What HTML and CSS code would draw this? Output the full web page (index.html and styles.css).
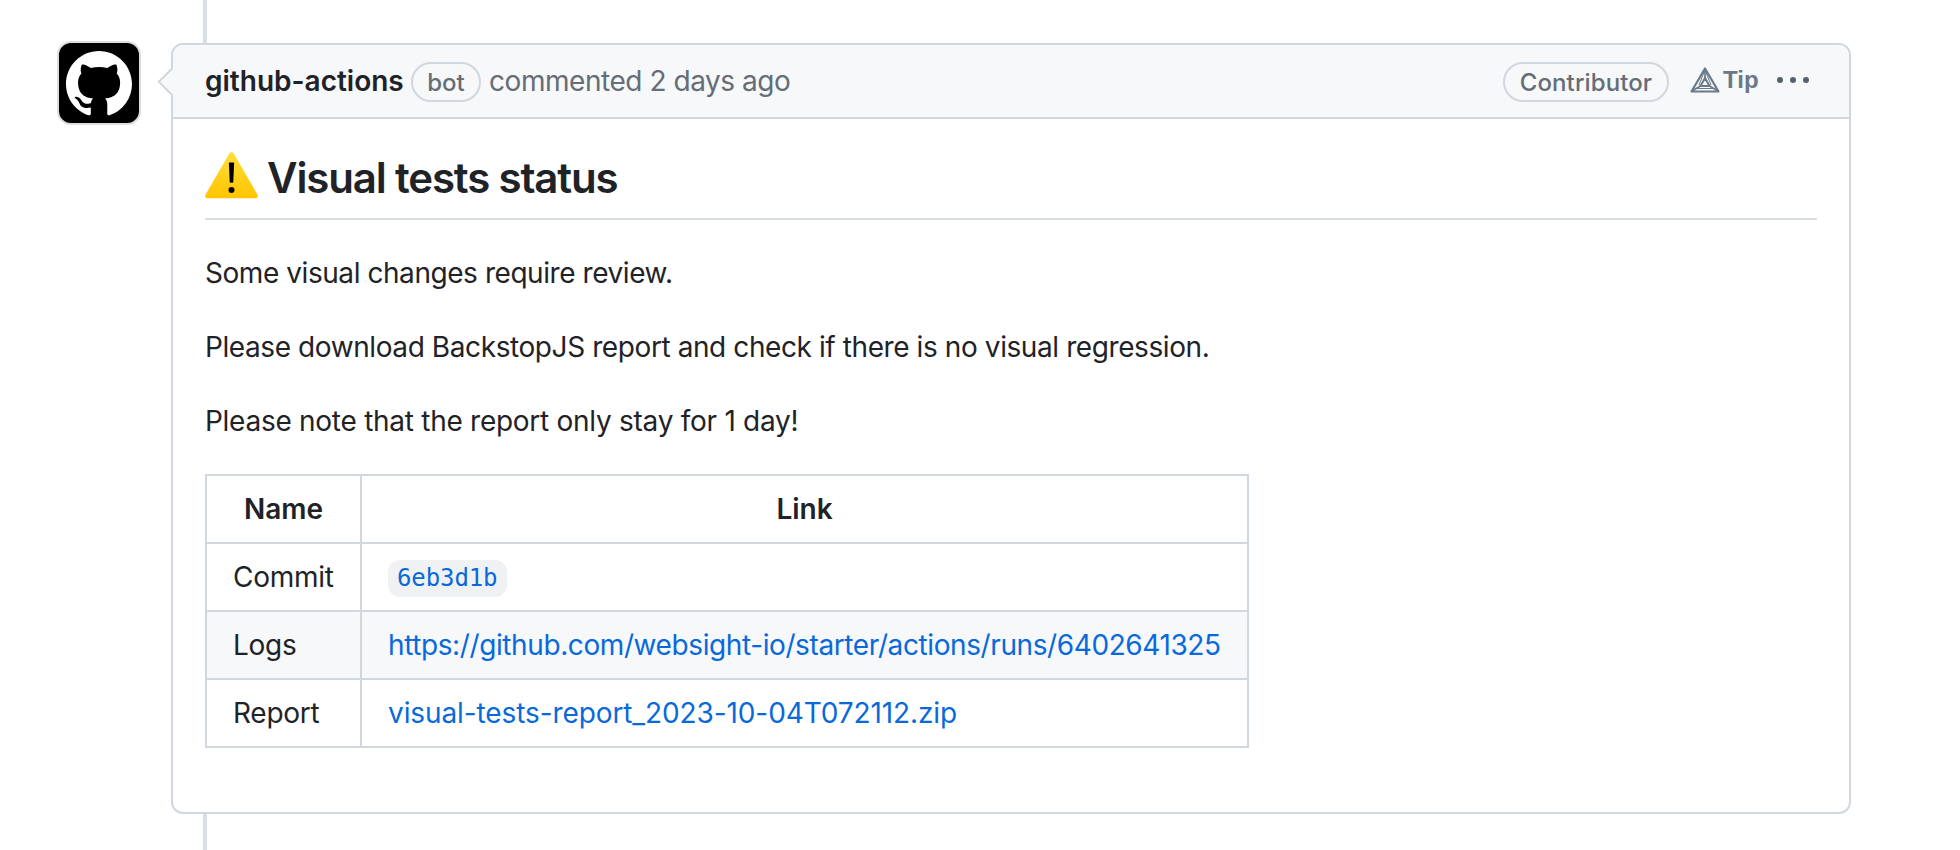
FILE: index.html
```html
<!DOCTYPE html>
<html lang="en">
<head>
<meta charset="utf-8">
<title>Visual tests status</title>
<link rel="stylesheet" href="styles.css">
</head>
<body>
<main class="timeline">
  <div class="avatar">
    <svg class="avatar-mark" viewBox="0 0 16 16"><path fill="#fff" d="M8 0C3.58 0 0 3.58 0 8c0 3.54 2.29 6.53 5.47 7.59.4.07.55-.17.55-.38 0-.19-.01-.82-.01-1.49-2.01.37-2.53-.49-2.69-.94-.09-.23-.48-.94-.82-1.13-.28-.15-.68-.52-.01-.53.63-.01 1.08.58 1.23.82.72 1.21 1.87.87 2.33.66.07-.52.28-.87.51-1.07-1.78-.2-3.64-.89-3.64-3.95 0-.87.31-1.59.82-2.15-.08-.2-.36-1.02.08-2.12 0 0 .67-.21 2.2.82.64-.18 1.32-.27 2-.27.68 0 1.36.09 2 .27 1.53-1.04 2.2-.82 2.2-.82.44 1.1.16 1.92.08 2.12.51.56.82 1.27.82 2.15 0 3.07-1.87 3.75-3.65 3.95.29.25.54.73.54 1.48 0 1.07-.01 1.93-.01 2.2 0 .21.15.46.55.38A8.013 8.013 0 0016 8c0-4.42-3.58-8-8-8z"/></svg>
  </div>
  <div class="thread">
    <div class="rail rail-top"></div>
    <article class="comment">
      <svg class="caret" viewBox="0 0 16 30"><path d="M16 1.5 2 15l14 13.500z" fill="#f6f8fa"/><path d="M15 1.500 1.800 14.700 15 27.900" fill="none" stroke="#d0d7de" stroke-width="2"/></svg>
      <header class="comment-header">
        <strong class="author">github-actions</strong>
        <span class="label label-bot">bot</span>
        <span class="meta">commented 2 days ago</span>
        <span class="label label-role">Contributor</span>
        <span class="tip">
          <svg class="tip-icon" viewBox="0 0 30 26" fill="none" stroke="#6b7a89" stroke-linejoin="round"><path stroke-width="2.200" d="M15 1.500 1.500 24.500h27z"/><path stroke-width="2" d="M15 11 10.500 19h9z"/><path stroke-width="1.700" d="M15 2v9M2 24l8.500-5M28 24l-8.500-5"/><path stroke-width="1" d="M14.500 4 9 18M15.500 4 21 18M6 21.500h18"/></svg>
          <span class="tip-text">Tip</span>
        </span>
        <svg class="kebab" viewBox="0 0 34 8" fill="#57606a"><circle cx="4" cy="4" r="3"/><circle cx="17" cy="4" r="3"/><circle cx="30" cy="4" r="3"/></svg>
      </header>
      <div class="comment-body">
        <h2 class="title">
          <svg class="warning" viewBox="0 0 53 47"><defs><linearGradient id="warn" x1="0" y1="0" x2="0" y2="1"><stop offset="0" stop-color="#ffdf3c"/><stop offset="1" stop-color="#ffc400"/></linearGradient></defs><path fill="url(#warn)" d="M24.100 1.700c1-1.800 3.800-1.800 4.800 0L52.400 42.500c1 1.900 0 3.800-2.200 3.800H2.800C.600 46.300-.400 44.400.600 42.500z"/><path fill="#000" d="M23.900 11.600c-.1-.8.300-1.200 1-1.200h3.200c.7 0 1.100.4 1 1.200l-.8 18.200c0 .6-.3 1-.8 1h-2c-.5 0-.8-.4-.8-1z"/><circle cx="26.500" cy="38" r="3"/></svg>
          <span class="title-text">Visual tests status</span>
        </h2>
        <p class="para para-1">Some visual changes require review.</p>
        <p class="para para-2">Please download BackstopJS report and check if there is no visual regression.</p>
        <p class="para para-3">Please note that the report only stay for 1 day!</p>
        <table class="results">
          <thead><tr><th class="col-name">Name</th><th>Link</th></tr></thead>
          <tbody>
            <tr><td>Commit</td><td><a class="link commit"><code class="sha">6eb3d1b</code></a></td></tr>
            <tr class="striped"><td>Logs</td><td><a class="link link-logs">https://github.com/websight-io/starter/actions/runs/6402641325</a></td></tr>
            <tr><td>Report</td><td><a class="link link-report">visual-tests-report_2023-10-04T072112.zip</a></td></tr>
          </tbody>
        </table>
      </div>
    </article>
    <div class="rail"></div>
  </div>
</main>
</body>
</html>
```
FILE: styles.css
```css
* { box-sizing: border-box; }
body {
  margin: 0;
  background: #fff;
  color: #1f2328;
  font: 28px/42px Inter, "Liberation Sans", sans-serif;
}
.timeline {
  display: flex;
  gap: 30px;
  height: 850px;
  padding: 0 109px 0 57px;
  overflow: hidden;
}
.avatar {
  display: flex;
  flex: none;
  justify-content: center;
  width: 84px;
  height: 84px;
  margin-top: 41px;
  padding-top: 8px;
  border: 2px solid #dddddd;
  border-radius: 14px;
  background: #000;
}
.avatar-mark { width: 66px; height: 66px; }
.thread {
  display: flex;
  flex: 1;
  flex-direction: column;
}
.rail {
  flex: 1;
  width: 4px;
  margin-left: 32px;
  background: #d8dee4;
}
.rail-top { flex: none; height: 43px; }
.comment {
  position: relative;
  height: 771px;
  border: 2px solid #d0d7de;
  border-radius: 12px;
}
.caret {
  position: absolute;
  top: 22px;
  left: -16px;
  width: 16px;
  height: 30px;
}
.comment-header {
  display: flex;
  align-items: center;
  height: 74px;
  padding: 2px 39px 0 32px;
  border-bottom: 2px solid #d0d7de;
  border-radius: 10px 10px 0 0;
  background: #f6f8fa;
  color: #656d76;
  white-space: nowrap;
}
.author { width: 206px; color: #1f2328; font-weight: 600; }
.meta { letter-spacing: -0.45px; }
.author, .meta { padding-bottom: 2px; }
.label {
  height: 40px;
  border: 2px solid #d0d7de;
  border-radius: 20px;
  font-size: 24px;
  font-weight: 500;
  line-height: 37px;
  text-align: center;
}
.label-bot { width: 70px; margin-right: 8px; }
.label-role {
  width: 166px;
  margin-left: auto;
  letter-spacing: 0.1px;
}
.tip {
  display: flex;
  align-items: center;
  width: 89px;
  padding: 0 0 4px 21px;
  color: #697988;
  font: bold 24px/38px "Liberation Sans", Arial, sans-serif;
}
.tip-icon { flex: none; width: 30px; height: 26px; margin-right: 3px; }
.kebab { width: 34px; height: 8px; margin: 0 0 4px 18px; }
.comment-body { padding: 32px; }
.title {
  display: flex;
  height: 69px;
  margin: 0 0 32px;
  border-bottom: 2px solid #d8dee4;
  font-size: 42px;
  font-weight: 600;
  letter-spacing: -1.15px;
  line-height: 53px;
}
.warning { width: 53px; height: 47px; margin: 1px 9px 0 0; }
.para { margin: 0 0 32px; white-space: nowrap; }
.para-1 { letter-spacing: -0.44px; }
.para-2 { letter-spacing: -0.41px; }
.para-3 { letter-spacing: -0.27px; }
.results {
  width: 1044px;
  border-collapse: collapse;
  table-layout: fixed;
}
.results th, .results td {
  height: 68px;
  padding: 0 26px;
  border: 2px solid #d0d7de;
  text-align: left;
  white-space: nowrap;
}
.results td { letter-spacing: -0.25px; }
.results th { font-weight: 600; text-align: center; }
.results .col-name { width: 155px; }
.striped { background: #f6f8fa; }
.link { color: #0969da; }
.link-logs { letter-spacing: -0.4px; }
.link-report { letter-spacing: -0.1px; }
.sha {
  display: block;
  width: 119px;
  height: 37px;
  margin-top: 2px;
  padding: 0 9px;
  border-radius: 12px;
  background: #eff1f3;
  font: 24px/37px "DejaVu Sans Mono", monospace;
  letter-spacing: -0.1px;
}
```
